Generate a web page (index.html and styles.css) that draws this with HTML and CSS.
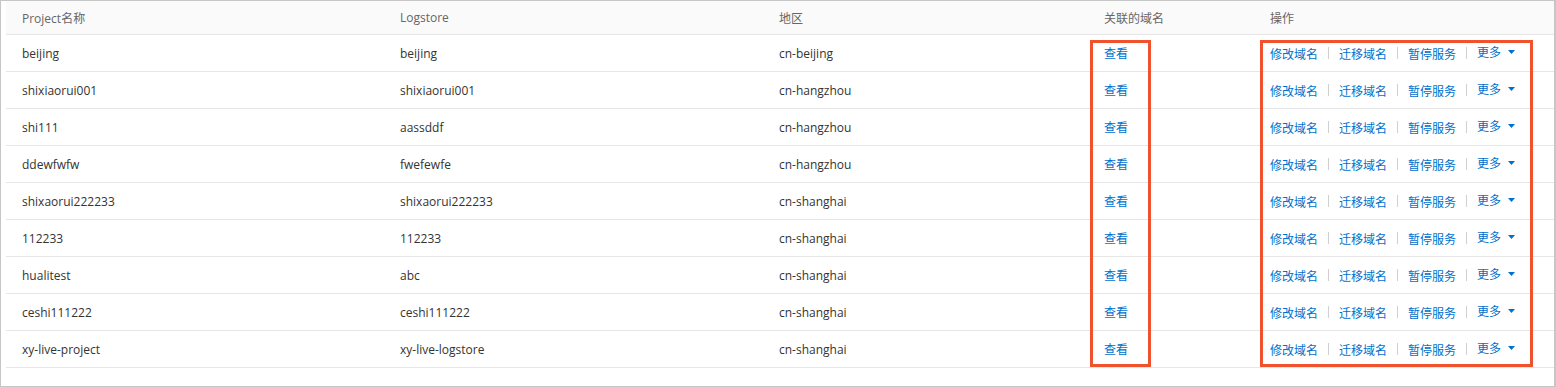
FILE: index.html
```html
<!DOCTYPE html>
<html lang="zh">
<head>
<meta charset="utf-8">
<link rel="stylesheet" href="styles.css">
</head>
<body>
<div class="frame">
  <table class="grid">
    <colgroup>
      <col class="c1"><col class="c2"><col class="c3"><col class="c4"><col class="c5">
    </colgroup>
    <thead>
      <tr><th>Project名称</th><th>Logstore</th><th>地区</th><th>关联的域名</th><th>操作</th></tr>
    </thead>
    <tbody id="rows"></tbody>
  </table>
  <div class="mark mark-a"></div>
  <div class="mark mark-b"></div>
</div>
<script>
const data = [
  ["beijing","beijing","cn-beijing"],
  ["shixiaorui001","shixiaorui001","cn-hangzhou"],
  ["shi111","aassddf","cn-hangzhou"],
  ["ddewfwfw","fwefewfe","cn-hangzhou"],
  ["shixaorui222233","shixaorui222233","cn-shanghai"],
  ["112233","112233","cn-shanghai"],
  ["hualitest","abc","cn-shanghai"],
  ["ceshi111222","ceshi111222","cn-shanghai"],
  ["xy-live-project","xy-live-logstore","cn-shanghai"]
];
const tb = document.getElementById("rows");
for (const r of data) {
  const tr = document.createElement("tr");
  tr.innerHTML = `<td>${r[0]}</td><td>${r[1]}</td><td>${r[2]}</td>
  <td><a class="lnk">查看</a></td>
  <td><span class="ops"><a class="lnk">修改域名</a><i class="sep"></i><a class="lnk">迁移域名</a><i class="sep"></i><a class="lnk">暂停服务</a><i class="sep"></i><a class="lnk more">更多<svg class="caret" width="7" height="4" viewBox="0 0 7 4"><path d="M0 0h7L3.5 4z" fill="#0070cc"/></svg></a></span></td>`;
  tb.appendChild(tr);
}
</script>
</body>
</html>
```
FILE: styles.css
```css
html, body { margin: 0; padding: 0; background: #fff; }
.frame {
  position: relative;
  width: 1556px;
  height: 387px;
  box-sizing: border-box;
  border: 1px solid #c6c6c6;
  border-right-width: 2px;
  padding-left: 5px;
  font-family: "Open Sans", "Noto Sans CJK SC", sans-serif;
  font-size: 12px;
  color: #333;
}
.grid {
  width: 100%;
  border-collapse: collapse;
  table-layout: fixed;
}
.c1 { width: 378px; }
.c2 { width: 379px; }
.c3 { width: 325px; }
.c4 { width: 166px; }
.c5 { width: auto; }
.grid th {
  height: 33px;
  padding: 0 0 0 16px;
  text-align: left;
  font-weight: normal;
  color: #666;
  background: #fafafa;
  border-bottom: 1px solid #e6e6e6;
}
.grid td {
  height: 36px;
  padding: 0 0 0 16px;
  border-bottom: 1px solid #e6e6e6;
  white-space: nowrap;
}
.lnk { color: #0070cc; font-family: "Noto Sans CJK SC", sans-serif; }
.ops { display: flex; align-items: center; }
.sep {
  display: inline-block;
  width: 1px;
  height: 12px;
  background: #d0d0d0;
  margin: 0 10px;
}
.more { position: relative; top: -2px; display: inline-flex; align-items: center; }
.caret { margin-left: 7px; margin-top: 2px; }
.mark {
  position: absolute;
  border: 3px solid #f0522e;
  box-sizing: border-box;
  top: 39px;
  height: 327px;
}
.mark-a { left: 1089px; width: 61px; }
.mark-b { left: 1259px; width: 273px; }
```
